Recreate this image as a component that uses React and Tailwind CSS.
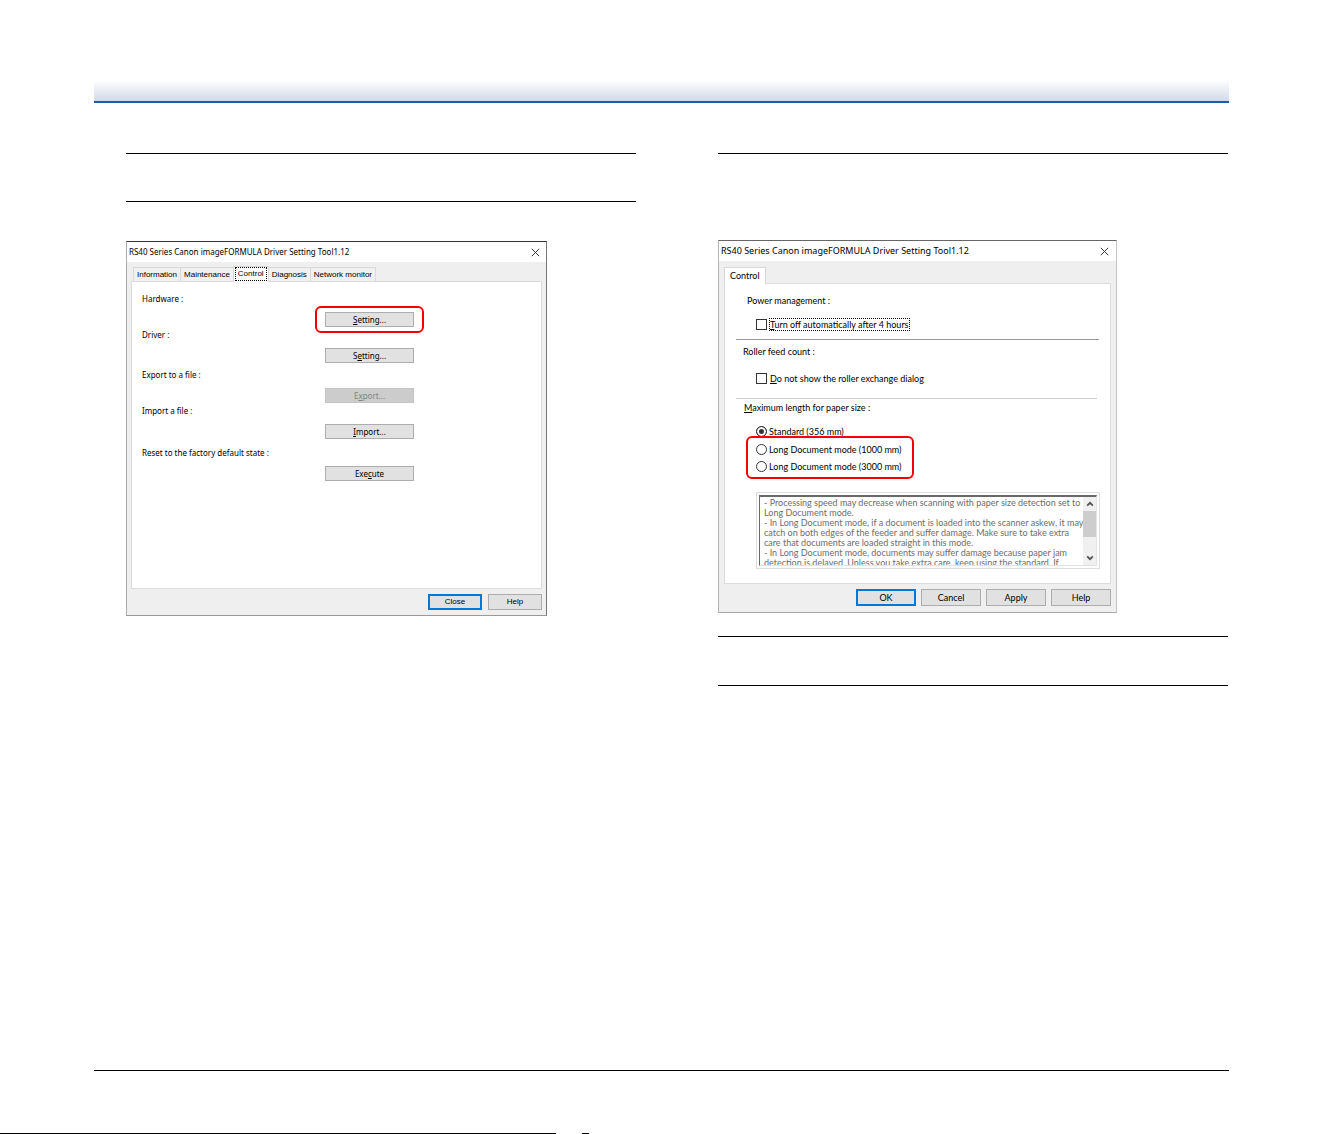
import React, { useState } from "react";

const TABS = ["Information", "Maintenance", "Control", "Diagnosis", "Network monitor"];

const ACTIONS = [
  { label: "Hardware :", before: "", key: "S", after: "etting...", gap: "mb-[2px]", highlighted: true },
  { label: "Driver :", before: "S", key: "e", after: "tting...", gap: "mb-[6px]" },
  { label: "Export to a file :", before: "E", key: "x", after: "port...", gap: "mb-[2px]", disabled: true },
  { label: "Import a file :", before: "", key: "I", after: "mport...", gap: "mb-2" },
  { label: "Reset to the factory default state :", before: "Exe", key: "c", after: "ute", gap: "" },
];

const NOTES = `- Processing speed may decrease when scanning with paper size detection set to
Long Document mode.
- In Long Document mode, if a document is loaded into the scanner askew, it may
catch on both edges of the feeder and suffer damage. Make sure to take extra
care that documents are loaded straight in this mode.
- In Long Document mode, documents may suffer damage because paper jam
detection is delayed. Unless you take extra care, keep using the standard. If`;

function CloseButton() {
  return (
    <button type="button" aria-label="Close window" className="flex size-4 items-center justify-center">
      <svg viewBox="0 0 9 9" className="size-[9px]" stroke="#222" strokeWidth="0.9" fill="none">
        <path d="M0.8 0.8 8.2 8.2M8.2 0.8 0.8 8.2" />
      </svg>
    </button>
  );
}

function DialogButton({ children, primary = false, className = "" }) {
  return (
    <button
      type="button"
      className={`flex items-center justify-center bg-[#e1e1e1] ${primary ? "border-2 border-[#0078d7]" : "border border-[#adadad]"} ${className}`}
    >
      {children}
    </button>
  );
}

function SettingToolDialog() {
  const [tab, setTab] = useState("Control");

  return (
    <section className="flex w-full max-w-[421px] flex-col border border-t-[#333] border-r-[#777] border-b-[#999] border-l-[#aaa] bg-[#efefef] text-[8px] leading-3 text-black">
      <header className="flex h-5 items-center justify-between bg-white pr-[3px] pl-[2px]">
        <h2 className="font-['Noto_Sans',sans-serif] whitespace-nowrap">RS40 Series Canon imageFORMULA Driver Setting Tool1.12</h2>
        <CloseButton />
      </header>

      <div className="px-1 pt-1">
        <div role="tablist" className="flex items-end pl-[3px]">
          {TABS.map((name) => (
            <button
              key={name}
              type="button"
              role="tab"
              aria-selected={tab === name}
              onClick={() => setTab(name)}
              className={
                tab === name
                  ? "relative -mb-px -ml-px h-4 border border-b-0 border-[#d9d9d9] bg-white px-px pb-px"
                  : "-ml-px h-[14px] border border-b-0 border-[#d9d9d9] bg-[#f0f0f0] px-[3px]"
              }
            >
              <span className={tab === name ? "block border border-dotted border-black px-[2px]" : "block"}>{name}</span>
            </button>
          ))}
        </div>

        <div className="border border-[#dcdcdc] bg-white px-[10px] pt-[11px] pb-[107px] font-['Noto_Sans',sans-serif]">
          {ACTIONS.map((a) => (
            <div key={a.label} className={a.gap}>
              <p>{a.label}</p>
              <div className="relative mt-[7px] ml-[183px] w-[89px]">
                <button
                  type="button"
                  disabled={a.disabled}
                  className={`flex h-[15px] w-full items-center justify-center border ${a.disabled ? "border-[#c4c4c4] bg-[#cccccc] text-[#838383]" : "border-[#adadad] bg-[#e1e1e1]"}`}
                >
                  {a.before}
                  <u>{a.key}</u>
                  {a.after}
                </button>
                {a.highlighted && (
                  <span className="pointer-events-none absolute -inset-x-[10px] -inset-y-[6px] rounded-md border-2 border-[#f80000]" />
                )}
              </div>
            </div>
          ))}
        </div>
      </div>

      <footer className="flex justify-end gap-[6px] px-1 pt-[5px] pb-[5px]">
        <DialogButton primary className="h-4 w-[54px]">Close</DialogButton>
        <DialogButton className="h-4 w-[54px]">Help</DialogButton>
      </footer>
    </section>
  );
}

function CheckRow({ id, letter, rest, focused = false }) {
  return (
    <div className="flex h-3 items-center gap-[2px] pl-[20px]">
      <input id={id} type="checkbox" className="size-[11px] appearance-none border border-[#333] bg-white checked:bg-[#333]" />
      <label htmlFor={id} className={focused ? "border border-dotted border-black leading-[11px]" : "border border-transparent leading-[11px]"}>
        <u>{letter}</u>
        {rest}
      </label>
    </div>
  );
}

function RadioRow({ id, label, value, mode, onChange }) {
  return (
    <div className="flex h-[17px] items-center gap-[2px]">
      <input
        id={id}
        type="radio"
        name="paper-length"
        checked={mode === value}
        onChange={() => onChange(value)}
        className="size-[11px] appearance-none rounded-full border border-[#333] bg-white checked:bg-[#333] checked:shadow-[inset_0_0_0_2px_white]"
      />
      <label htmlFor={id}>{label}</label>
    </div>
  );
}

function ScrollArrow({ label, d }) {
  return (
    <button type="button" aria-label={label} className="flex h-[14px] w-full items-center justify-center">
      <svg viewBox="0 0 8 6" className="h-[6px] w-2" fill="none" stroke="#505050" strokeWidth="1.7">
        <path d={d} />
      </svg>
    </button>
  );
}

function ControlDialog() {
  const [mode, setMode] = useState("standard");

  return (
    <section className="flex w-full max-w-[399px] flex-col border border-t-[#666] border-r-[#c4c4c4] border-b-[#aaa] border-l-[#b4b4b4] bg-[#efefef] font-['Lato',sans-serif] text-[9px] leading-3 text-black">
      <header className="flex h-5 items-center justify-between bg-white pr-1 pl-[2px]">
        <h2 className="font-['Noto_Sans',sans-serif] whitespace-nowrap">RS40 Series Canon imageFORMULA Driver Setting Tool1.12</h2>
        <CloseButton />
      </header>

      <div className="px-[5px] pt-[6px]">
        <div role="tablist" className="flex">
          <button type="button" role="tab" aria-selected="true" className="relative -mb-px h-[17px] border border-b-0 border-[#d9d9d9] bg-white px-[5px]">
            Control
          </button>
        </div>

        <div className="border border-[#dcdcdc] bg-white pt-[11px] pr-[10px] pb-[14px] pl-[11px]">
          <p className="pl-[11px]">Power management :</p>
          <div className="mt-[11px]">
            <CheckRow id="auto-off" letter="T" rest="urn off automatically after 4 hours" focused />
          </div>
          <hr className="mt-[9px] mr-px border-t border-[#999]" />

          <p className="mt-[6px] pl-[7px]">Roller feed count :</p>
          <div className="mt-[14px]">
            <CheckRow id="hide-roller" letter="D" rest="o not show the roller exchange dialog" />
          </div>
          <hr className="mt-[14px] mr-[3px] border-t border-[#ccc]" />

          <p className="mt-[3px] pl-2">
            <u>M</u>aximum length for paper size :
          </p>
          <div className="mt-[9px] h-[13px] overflow-hidden pl-5">
            <RadioRow id="len-standard" label="Standard (356 mm)" value="standard" mode={mode} onChange={setMode} />
          </div>
          <div className="ml-[10px] w-[168px] rounded-md border-2 border-[#f80000] pt-[3px] pb-[2px] pl-2">
            <RadioRow id="len-1000" label="Long Document mode (1000 mm)" value="1000" mode={mode} onChange={setMode} />
            <RadioRow id="len-3000" label="Long Document mode (3000 mm)" value="3000" mode={mode} onChange={setMode} />
          </div>

          <div className="mt-[13px] ml-5 border border-[#dedede] p-[2px]">
            <div className="flex h-[71px] border border-t-2 border-t-[#696969] border-r-[#e3e3e3] border-b-[#e3e3e3] border-l-[#696969]">
              <textarea
                readOnly
                aria-label="Notes on Long Document mode"
                value={NOTES}
                className="min-w-0 flex-1 resize-none overflow-hidden pt-px pl-1 leading-[10px] whitespace-pre text-[#6d6d6d] outline-none"
              />
              <div className="flex w-[13px] flex-col bg-[#f0f0f0]">
                <ScrollArrow label="Scroll up" d="M1.2 4.6 4 1.8 6.8 4.6" />
                <div className="h-[26px] bg-[#cdcdcd]" />
                <div className="flex-1" />
                <ScrollArrow label="Scroll down" d="M1.2 1.4 4 4.2 6.8 1.4" />
              </div>
            </div>
          </div>
        </div>
      </div>

      <footer className="flex justify-end gap-[5px] px-[5px] pt-[5px] pb-[6px]">
        <DialogButton primary className="h-[17px] w-[60px]">OK</DialogButton>
        <DialogButton className="h-[17px] w-[60px]">Cancel</DialogButton>
        <DialogButton className="h-[17px] w-[60px]">Apply</DialogButton>
        <DialogButton className="h-[17px] w-[60px]">Help</DialogButton>
      </footer>
    </section>
  );
}

export default function App() {
  return (
    <div className="flex min-h-screen flex-col bg-white font-['Liberation_Sans',Arial,sans-serif]">
      <div className="mx-[94px] mt-20 h-[23px] border-b-2 border-[#1f5aa8] bg-linear-to-b from-white to-[#d3d9e8]" />

      <main className="mx-[94px] mt-[50px] grid flex-1 grid-cols-2 content-start gap-x-[82px] pr-px pl-8">
        <div>
          <div className="h-[49px] border-y border-black" />
          <div className="mt-[39px]">
            <SettingToolDialog />
          </div>
        </div>
        <div>
          <hr className="border-t border-black" />
          <div className="mt-[86px]">
            <ControlDialog />
          </div>
          <div className="mt-[23px] h-[50px] border-y border-black" />
        </div>
      </main>

      <hr className="mx-[94px] border-t border-black" />
      <div className="mt-[62px] flex gap-[26px]">
        <div className="h-px w-[42%] bg-black" />
        <div className="h-px w-[7px] bg-black" />
      </div>
    </div>
  );
}
